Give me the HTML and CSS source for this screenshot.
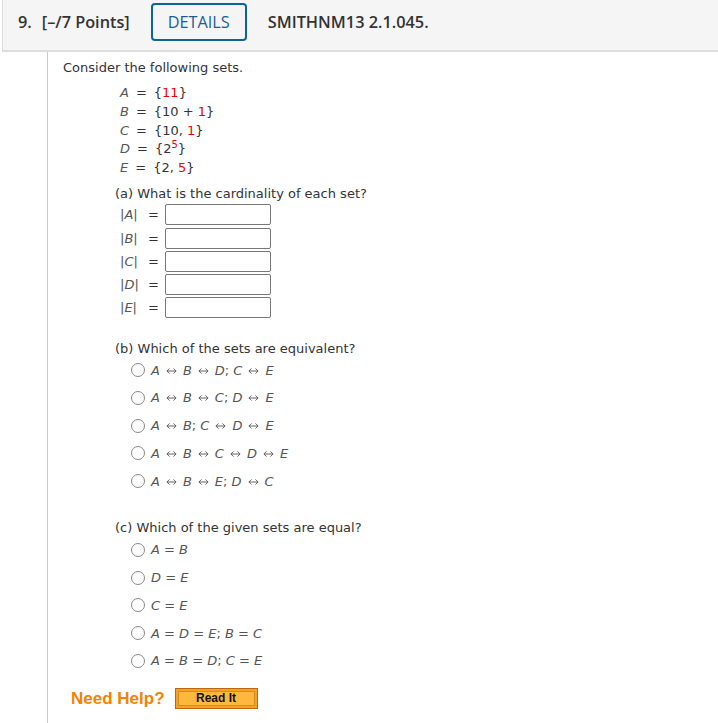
FILE: index.html
```html
<!DOCTYPE html>
<html>
<head>
<meta charset="utf-8">
<link rel="stylesheet" href="styles.css">
</head>
<body>
<svg width="0" height="0" class="defs" aria-hidden="true">
  <symbol id="lr" viewBox="0 0 12 8">
    <path d="M1 4H11M3.8 1.2L1 4L3.8 6.8M8.2 1.2L11 4L8.2 6.8" fill="none" stroke="#555" stroke-width="1"/>
  </symbol>
</svg>
<div class="header">
  <span class="qnum">9.</span>
  <span class="points">[–/7 Points]</span>
  <span class="details">DETAILS</span>
  <span class="code">SMITHNM13 2.1.045.</span>
</div>
<div class="content">
  <p class="intro">Consider the following sets.</p>
  <div class="sets">
    <div class="set"><i>A</i><span class="seq">=</span>{<span class="r">11</span>}</div>
    <div class="set"><i>B</i><span class="seq">=</span>{10 + <span class="r">1</span>}</div>
    <div class="set"><i>C</i><span class="seq">=</span>{10, <span class="r">1</span>}</div>
    <div class="set"><i>D</i><span class="seq">=</span>{2<sup class="r">5</sup>}</div>
    <div class="set"><i>E</i><span class="seq">=</span>{2, <span class="r">5</span>}</div>
  </div>

  <p class="part parta">(a) What is the cardinality of each set?</p>
  <div class="card">
    <div class="crow"><span class="lbl">|<i>A</i>|</span><span class="eq">=</span><span class="box"></span></div>
    <div class="crow"><span class="lbl">|<i>B</i>|</span><span class="eq">=</span><span class="box"></span></div>
    <div class="crow"><span class="lbl">|<i>C</i>|</span><span class="eq">=</span><span class="box"></span></div>
    <div class="crow"><span class="lbl">|<i>D</i>|</span><span class="eq">=</span><span class="box"></span></div>
    <div class="crow"><span class="lbl">|<i>E</i>|</span><span class="eq">=</span><span class="box"></span></div>
  </div>

  <p class="part partb">(b) Which of the sets are equivalent?</p>
  <div class="opts optsb">
    <div class="opt"><span class="radio"></span><span class="txt"><i>A</i><svg class="ar"><use href="#lr"/></svg><i>B</i><svg class="ar"><use href="#lr"/></svg><i>D</i>; <i>C</i><svg class="ar"><use href="#lr"/></svg><i>E</i></span></div>
    <div class="opt"><span class="radio"></span><span class="txt"><i>A</i><svg class="ar"><use href="#lr"/></svg><i>B</i><svg class="ar"><use href="#lr"/></svg><i>C</i>; <i>D</i><svg class="ar"><use href="#lr"/></svg><i>E</i></span></div>
    <div class="opt"><span class="radio"></span><span class="txt"><i>A</i><svg class="ar"><use href="#lr"/></svg><i>B</i>; <i>C</i><svg class="ar"><use href="#lr"/></svg><i>D</i><svg class="ar"><use href="#lr"/></svg><i>E</i></span></div>
    <div class="opt"><span class="radio"></span><span class="txt"><i>A</i><svg class="ar"><use href="#lr"/></svg><i>B</i><svg class="ar"><use href="#lr"/></svg><i>C</i><svg class="ar"><use href="#lr"/></svg><i>D</i><svg class="ar"><use href="#lr"/></svg><i>E</i></span></div>
    <div class="opt"><span class="radio"></span><span class="txt"><i>A</i><svg class="ar"><use href="#lr"/></svg><i>B</i><svg class="ar"><use href="#lr"/></svg><i>E</i>; <i>D</i><svg class="ar"><use href="#lr"/></svg><i>C</i></span></div>
  </div>

  <p class="part partc">(c) Which of the given sets are equal?</p>
  <div class="opts optsc">
    <div class="opt"><span class="radio"></span><span class="txt"><i>A</i> = <i>B</i></span></div>
    <div class="opt"><span class="radio"></span><span class="txt"><i>D</i> = <i>E</i></span></div>
    <div class="opt"><span class="radio"></span><span class="txt"><i>C</i> = <i>E</i></span></div>
    <div class="opt"><span class="radio"></span><span class="txt"><i>A</i> = <i>D</i> = <i>E</i>; <i>B</i> = <i>C</i></span></div>
    <div class="opt"><span class="radio"></span><span class="txt"><i>A</i> = <i>B</i> = <i>D</i>; <i>C</i> = <i>E</i></span></div>
  </div>

  <div class="help">
    <span class="need">Need Help?</span>
    <span class="readit"><span class="readit-inner">Read It</span></span>
  </div>
</div>
</body>
</html>
```

FILE: styles.css
```css
html, body {
  margin: 0;
  padding: 0;
  background: #fff;
}
body {
  font-family: "DejaVu Sans", Verdana, sans-serif;
  font-size: 13px;
  color: #333;
  height: 723px;
  overflow: hidden;
}
.defs {
  position: absolute;
  width: 0;
  height: 0;
}
.header {
  margin-left: 2px;
  height: 52px;
  box-sizing: border-box;
  background: #f5f5f5;
  border-left: 1px solid #ddd;
  border-bottom: 2px solid #ddd;
  display: flex;
  align-items: flex-start;
  padding-top: 3px;
  font-family: "Open Sans", sans-serif;
  font-weight: 600;
  font-size: 16.3px;
  color: #333;
}
.qnum {
  margin-left: 15px;
  line-height: 38px;
}
.points {
  margin-left: 10px;
  line-height: 38px;
}
.details {
  margin-left: 21px;
  width: 96px;
  height: 38px;
  box-sizing: border-box;
  border: 2px solid #0b649c;
  border-radius: 4px;
  color: #1a5e95;
  text-align: center;
  line-height: 34px;
  font-weight: 500;
}
.code {
  margin-left: 21px;
  line-height: 38px;
}
.content {
  margin-left: 47px;
  border-left: 1px solid #ccc;
  padding-left: 15px;
  padding-top: 7px;
  height: 680px;
}
.intro {
  margin: 0;
  line-height: 18px;
}
.sets {
  margin: 7px 0 0 57px;
}
.set {
  line-height: 18.8px;
  height: 18.8px;
}
.seq {
  margin: 0 7px;
}
.set i, .crow i, .opt i {
  color: #555;
}
.r {
  color: #e00;
}
sup.r {
  font-size: 10px;
  vertical-align: 5px;
  line-height: 0;
}
.part {
  margin: 0 0 0 52px;
  line-height: 18px;
}
.parta {
  margin-top: 7.5px;
}
.card {
  margin: 1px 0 0 57px;
}
.crow {
  display: flex;
  align-items: center;
  height: 21px;
  margin-bottom: 2.2px;
}
.lbl {
  width: 28px;
  color: #555;
}
.eq {
  width: 17px;
}
.box {
  width: 104px;
  height: 19px;
  border: 1px solid #777;
  border-radius: 2px;
  background: #fff;
}
.partb {
  margin-top: 22px;
}
.partc {
  margin-top: 24px;
}
.opts {
  margin-left: 68px;
}
.optsb {
  margin-top: -2px;
}
.optsc {
  margin-top: -1px;
}
.opt {
  display: flex;
  align-items: center;
  height: 27.75px;
  color: #555;
}
.txt {
  display: inline-flex;
  align-items: center;
  white-space: pre;
}
.radio {
  width: 12px;
  height: 12px;
  border: 1px solid #888;
  border-radius: 50%;
  margin-right: 6px;
  flex: none;
}
.ar {
  width: 11px;
  height: 8px;
  margin: 1px 6px 0;
  flex: none;
}
.help {
  display: flex;
  align-items: center;
  margin: 13.5px 0 0 8px;
}
.need {
  font-family: "Liberation Sans", Arial, sans-serif;
  font-weight: bold;
  font-size: 17px;
  color: #f08300;
}
.readit {
  margin-left: 10px;
  width: 83px;
  height: 21px;
  box-sizing: border-box;
  border: 1px solid #b8690e;
  background: #f6a02a;
  padding: 2px;
  display: flex;
}
.readit-inner {
  flex: 1;
  border: 1px solid #d98a1e;
  background: #ffb83e;
  font-family: "Liberation Sans", Arial, sans-serif;
  font-weight: bold;
  font-size: 12px;
  color: #111;
  text-align: center;
  line-height: 13px;
}
```
